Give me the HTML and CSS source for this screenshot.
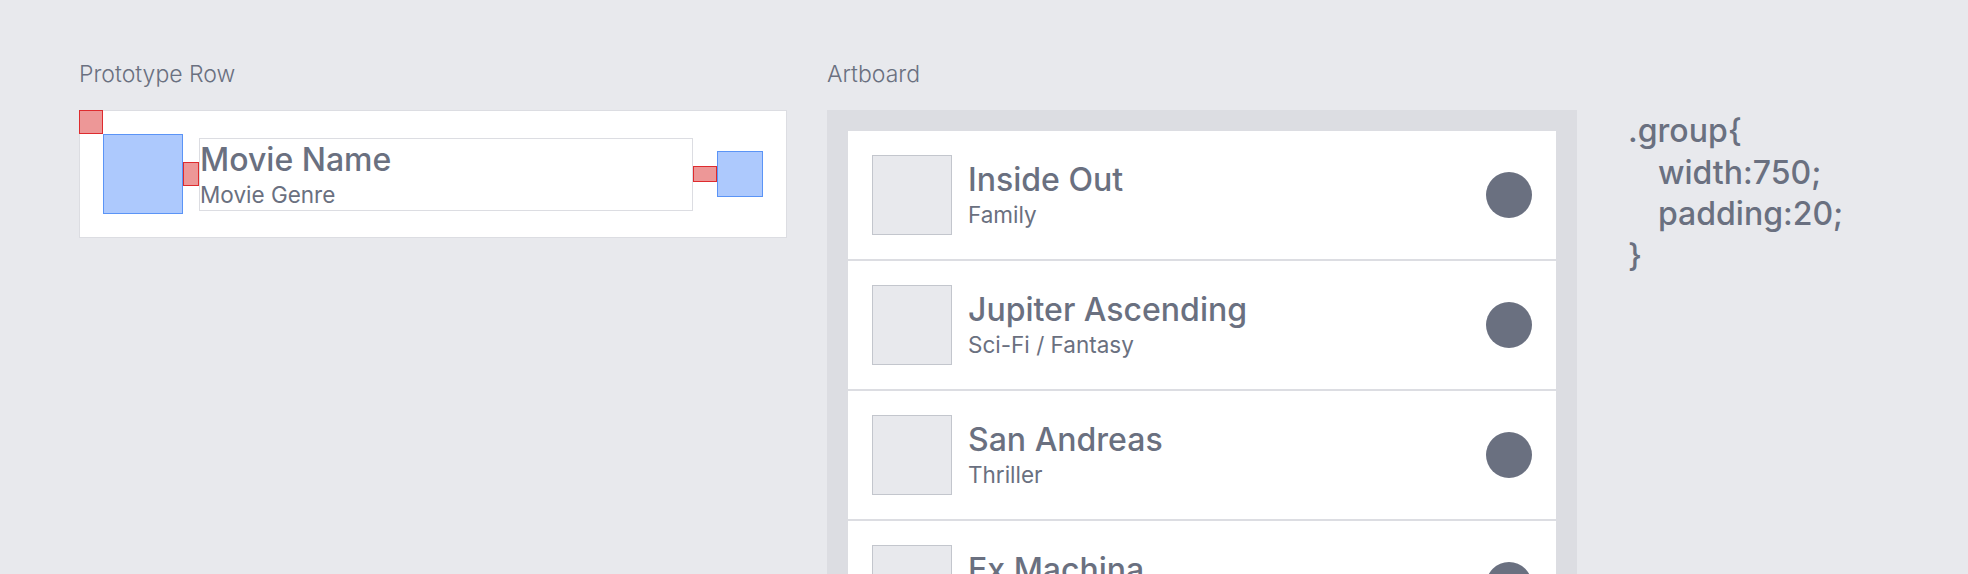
FILE: index.html
```html
<!DOCTYPE html>
<html lang="en">
<head>
<meta charset="utf-8">
<title>Prototype Row / Artboard</title>
<link rel="stylesheet" href="styles.css">
</head>
<body>
<div class="page">
  <section class="col">
    <div class="label">Prototype Row</div>
    <div class="proto">
      <span class="pad-mark"></span>
      <div class="thumb-proto"></div>
      <div class="spacer spacer-v"></div>
      <div class="text proto-text">
        <div class="title">Movie Name</div>
        <div class="sub">Movie Genre</div>
      </div>
      <div class="spacer spacer-h"></div>
      <div class="dot-proto"></div>
    </div>
  </section>

  <section class="col">
    <div class="label">Artboard</div>
    <div class="artboard">
      <div class="row">
        <div class="thumb"></div>
        <div class="text">
          <div class="title">Inside Out</div>
          <div class="sub">Family</div>
        </div>
        <div class="dot"></div>
      </div>
      <div class="row">
        <div class="thumb"></div>
        <div class="text">
          <div class="title">Jupiter Ascending</div>
          <div class="sub">Sci-Fi / Fantasy</div>
        </div>
        <div class="dot"></div>
      </div>
      <div class="row">
        <div class="thumb"></div>
        <div class="text">
          <div class="title">San Andreas</div>
          <div class="sub">Thriller</div>
        </div>
        <div class="dot"></div>
      </div>
      <div class="row">
        <div class="thumb"></div>
        <div class="text">
          <div class="title">Ex Machina</div>
          <div class="sub">Sci-Fi / Thriller</div>
        </div>
        <div class="dot"></div>
      </div>
    </div>
  </section>

  <section class="code">
    <div class="code-line">.group{</div>
    <div class="code-line indent">width:750;</div>
    <div class="code-line indent">padding:20;</div>
    <div class="code-line">}</div>
  </section>
</div>
</body>
</html>
```

FILE: styles.css
```css
* { box-sizing: border-box; }

html, body {
  margin: 0;
  padding: 0;
  height: 100%;
  overflow: hidden;
}

body {
  background: #e8e9ed;
  color: #6a7080;
  font-family: Inter, "Liberation Sans", sans-serif;
}

.page {
  display: flex;
  align-items: flex-start;
  gap: 40px;
  padding-left: 79px;
}

.col {
  display: flex;
  flex-direction: column;
  padding-top: 60px;
}

.label {
  font-size: 23px;
  font-weight: 300;
  line-height: 28px;
  margin-bottom: 22px;
}

/* Prototype row */
.proto {
  position: relative;
  width: 708px;
  height: 128px;
  background: #ffffff;
  border: 1px solid #dcdde2;
  padding: 23px;
  display: flex;
  align-items: center;
}

.pad-mark {
  position: absolute;
  left: -1px;
  top: -1px;
  width: 24px;
  height: 24px;
  background: #ed9797;
  border: 1px solid #de2b2e;
}

.thumb-proto {
  width: 80px;
  height: 80px;
  flex: none;
  background: #adc9fd;
  border: 1px solid #5b94f6;
}

.spacer {
  flex: none;
  background: #ed9797;
  border: 1px solid #de2b2e;
}

.spacer-v { width: 16px; height: 24px; }
.spacer-h { width: 24px; height: 16px; }

.dot-proto {
  width: 46px;
  height: 46px;
  flex: none;
  background: #adc9fd;
  border: 1px solid #5b94f6;
}

.text {
  flex: 1;
  display: flex;
  flex-direction: column;
  padding-top: 1px;
  min-width: 0;
}

.proto-text {
  height: 73px;
  border: 1px solid #dcdde2;
}

.title {
  font-size: 32px;
  font-weight: 500;
  line-height: 40px;
  white-space: nowrap;
}

.sub {
  font-size: 22.5px;
  font-weight: 400;
  line-height: 30px;
  white-space: nowrap;
}

/* Artboard */
.artboard {
  width: 750px;
  background: #dcdde2;
  padding: 21px;
  display: flex;
  flex-direction: column;
  gap: 2px;
}

.row {
  height: 128px;
  background: #ffffff;
  padding: 0 24px;
  display: flex;
  align-items: center;
  gap: 16px;
}

.thumb {
  width: 80px;
  height: 80px;
  flex: none;
  background: #e8e9ed;
  border: 1px solid #c3c6cd;
}

.row .text {
  height: 73px;
}

.dot {
  width: 46px;
  height: 46px;
  flex: none;
  border-radius: 50%;
  background: #6a7080;
  margin-left: 8px;
}

/* Code */
.code {
  padding-top: 110px;
  padding-left: 11px;
  font-size: 32px;
  font-weight: 500;
  line-height: 41.5px;
}

.code-line { white-space: nowrap; }
.code-line.indent { padding-left: 30px; }
```
